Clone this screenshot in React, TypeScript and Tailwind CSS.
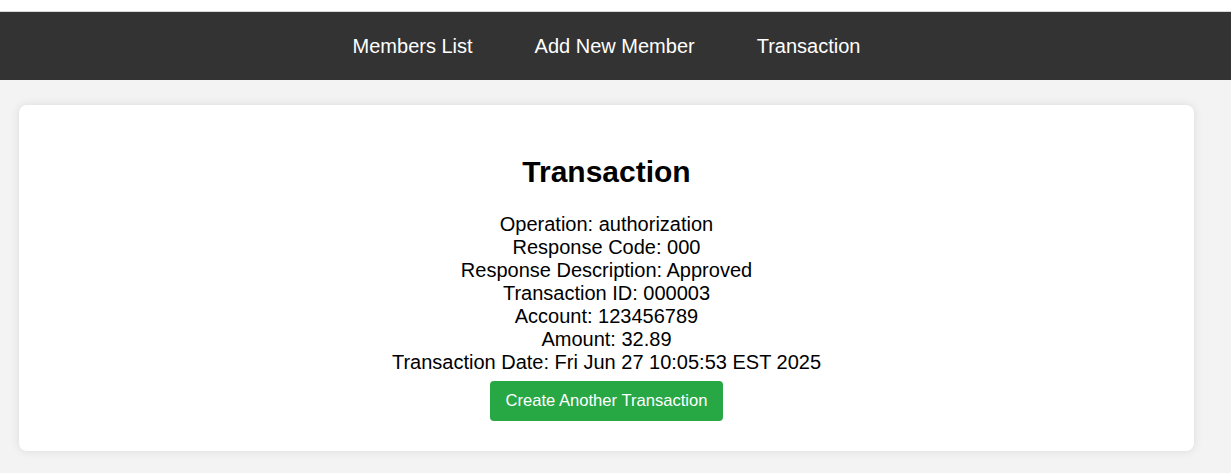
import React from "react";

const navLinks = ["Members List", "Add New Member", "Transaction"];

const details = [
  "Operation: authorization",
  "Response Code: 000",
  "Response Description: Approved",
  "Transaction ID: 000003",
  "Account: 123456789",
  "Amount: 32.89",
  "Transaction Date: Fri Jun 27 10:05:53 EST 2025",
];

export default function App() {
  return (
    <div className="min-h-[473px] w-[1231px] bg-[#f3f3f3] font-['Liberation_Sans',Arial,sans-serif] text-black">
      <div className="h-[12px] bg-white border-b border-[#d9d9d9]" />
      <nav className="flex h-[68px] items-center justify-center gap-[62px] bg-[#333333] pr-[18px]">
        {navLinks.map((link) => (
          <a key={link} href="#" className="text-[20px] leading-[23px] text-white">
            {link}
          </a>
        ))}
      </nav>
      <main className="pt-[25px] pl-[19px]">
        <section className="flex w-[1175px] flex-col items-center rounded-[8px] bg-white pt-[49px] pb-[30px] shadow-[0_0_10px_rgba(0,0,0,0.1)]">
          <h2 className="text-[30px] font-bold leading-[35px]">Transaction</h2>
          <div className="mt-[24px] flex flex-col items-center text-[20px] leading-[23px]">
            {details.map((line) => (
              <p key={line}>{line}</p>
            ))}
          </div>
          <button className="mt-[7px] h-[40px] rounded-[4px] bg-[#28a745] px-[15px] text-[16.6px] text-white">
            Create Another Transaction
          </button>
        </section>
      </main>
    </div>
  );
}
